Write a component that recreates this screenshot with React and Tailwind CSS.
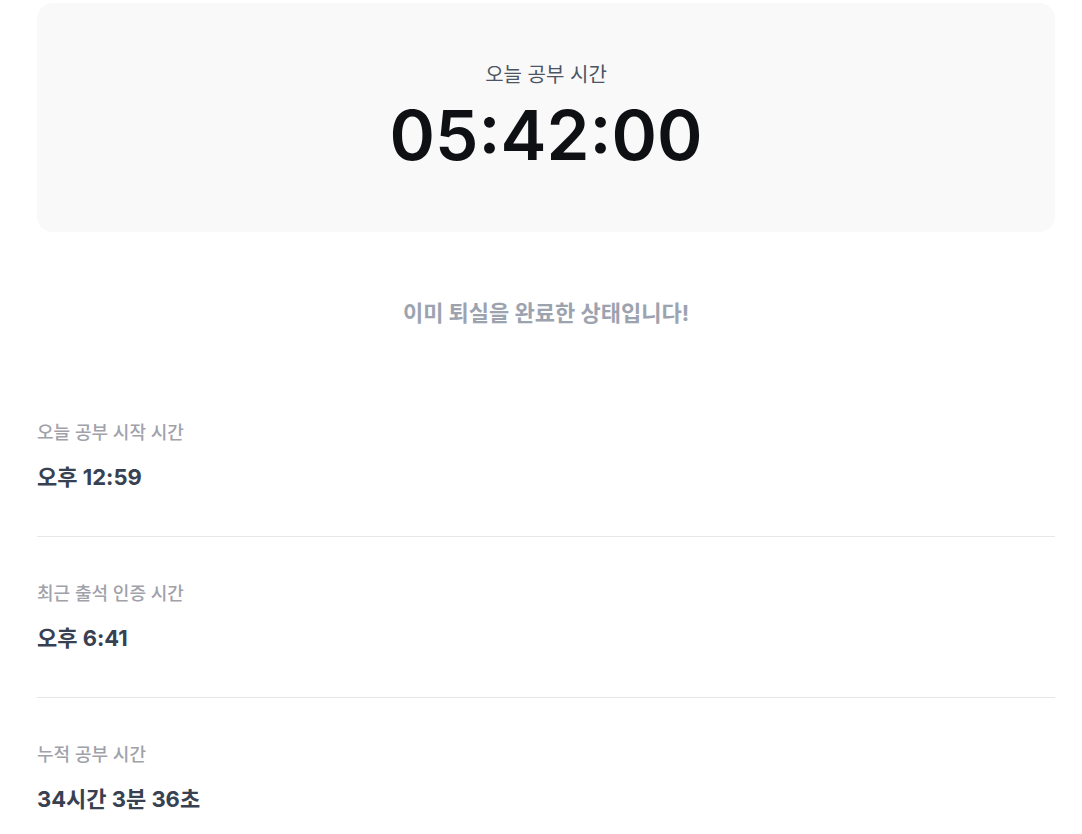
import React from 'react';

const font = { fontFamily: 'Inter, "Noto Sans CJK KR", sans-serif' };

const rows = [
  { label: '오늘 공부 시작 시간', value: '오후 12:59' },
  { label: '최근 출석 인증 시간', value: '오후 6:41' },
  { label: '누적 공부 시간', value: '34시간 3분 36초' },
];

export default function App() {
  return (
    <div className="bg-white min-h-screen pl-[37px] pr-[27px] pt-[3px]" style={font}>
      {/* Timer card */}
      <div className="bg-[#f9f9f9] rounded-2xl h-[229px] flex flex-col items-center pt-[58px]">
        <p className="text-xl leading-7 text-[#4b5563]">오늘 공부 시간</p>
        <p className="text-[69px] leading-none font-semibold text-[#0f1014] mt-[12px]">05:42:00</p>
      </div>

      <p className="text-center text-[22px] leading-[30px] font-bold text-[#9ca3af] mt-[66px]">
        이미 퇴실을 완료한 상태입니다!
      </p>

      <div className="mt-[48px]">
        {rows.map((row, i) => (
          <div
            key={row.label}
            className={`py-11 ${i < rows.length - 1 ? 'border-b border-[#e5e7eb]' : ''}`}
          >
            <p className="text-lg leading-[26px] font-medium text-[#a1a1aa]">{row.label}</p>
            <p className="text-[22px] leading-[30px] font-bold text-[#374151] mt-4">{row.value}</p>
          </div>
        ))}
      </div>
    </div>
  );
}
